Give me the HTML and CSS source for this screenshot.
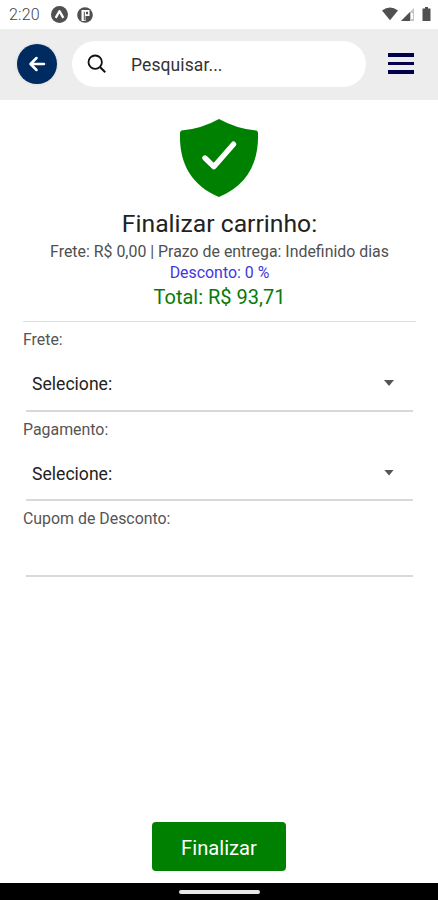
FILE: index.html
```html
<!DOCTYPE html>
<html lang="pt-BR">
<head>
<meta charset="utf-8">
<title>Finalizar carrinho</title>
<link rel="stylesheet" href="styles.css">
</head>
<body>
<div class="status">
  <span class="clock">2:20</span>
  <svg class="app-icon" viewBox="0 0 16 16"><circle cx="8" cy="8" r="8" fill="#505050"/><path d="M4.400 11.200 8 4.800l3.600 6.400M7.700 5.500h.6" fill="none" stroke="#fff" stroke-width="2.100" stroke-linejoin="round"/></svg>
  <svg class="app-icon second" viewBox="0 0 16 16"><circle cx="8" cy="8" r="7.800" fill="#505050"/><path d="M4.500 3h8v6H8.500v5H4.500z" fill="#fff"/><path d="M6.800 4.800h1v8.500h-1zM9 4.800h2v2.400H9z" fill="#505050"/></svg>
  <svg class="indicators" viewBox="0 0 50 16"><path d="M0 3.500Q8-2.500 16 3.500L8 13.200z" fill="#505050"/><path d="M19 14 32 1v13z" fill="#c4c4c4"/><path d="M19 14 28 5v9z" fill="#505050"/><path d="M29 6h2v6h-2z" fill="#fff"/><path d="M40.500 1.500h2.500V0h3v1.500h2.500V14h-8z" fill="#505050"/></svg>
</div>
<header class="header">
  <button class="back" aria-label="Voltar"><svg viewBox="0 0 20 20"><path d="M17 10H4M9.500 4 3.500 10l6 6" fill="none" stroke="#fff" stroke-width="2.500" stroke-linecap="round" stroke-linejoin="round"/></svg></button>
  <label class="search"><svg viewBox="0 0 20 20"><circle cx="8.200" cy="8.200" r="6.700" fill="none" stroke="#111" stroke-width="1.800"/><path d="m13 13 5.200 5.200" stroke="#111" stroke-width="2"/></svg><span>Pesquisar...</span></label>
  <button class="menu" aria-label="Menu"><i></i><i></i><i></i></button>
</header>
<main class="main">
  <svg class="shield" viewBox="0 0 80 80"><path d="M40 1Q58 11 77.500 12.500Q79 13 79 15C80 45 68 67 40 79C12 67 0 45 1 15Q1 13 2.500 12.500Q22 11 40 1Z" fill="#008000"/><path d="m26 40 8.800 8.700 19.700-22.500" fill="none" stroke="#fff" stroke-width="5.400" stroke-linecap="round" stroke-linejoin="round"/></svg>
  <h1 class="title"><span>Finalizar carrinho:</span></h1>
  <p class="shipping">Frete: R$ 0,00 | Prazo de entrega: Indefinido dias</p>
  <p class="discount">Desconto: 0 %</p>
  <p class="total">Total: R$ 93,71</p>
  <form class="form">
    <div class="label">Frete:</div>
    <div class="select"><span>Selecione:</span><i class="caret"></i></div>
    <div class="label">Pagamento:</div>
    <div class="select"><span>Selecione:</span><i class="caret"></i></div>
    <div class="label">Cupom de Desconto:</div>
    <div class="input"></div>
  </form>
  <button class="submit">Finalizar</button>
</main>
<footer class="nav"><i></i></footer>
</body>
</html>
```
FILE: styles.css
```css
* { box-sizing: border-box; }
body {
  margin: 0;
  height: 900px;
  display: flex;
  flex-direction: column;
  overflow: hidden;
  background: #fff;
  font-family: Roboto, sans-serif;
  color: #222;
}
h1, p { margin: 0; font-weight: 400; white-space: nowrap; }
button { border: 0; padding: 0; font-family: inherit; }
svg { display: block; flex: none; }

.status { height: 29px; display: flex; align-items: center; padding: 0 6px 0 9px; }
.clock { width: 42px; font-size: 16px; line-height: 28px; font-weight: 300; color: #444; letter-spacing: .2px; }
.app-icon { width: 17px; height: 17px; }
.second { margin-left: 9px; width: 16px; height: 16px; }
.indicators { width: 50px; height: 16px; margin-left: auto; }

.header { height: 71px; display: flex; align-items: center; padding: 0 24px 1px 17px; background: #ededed; }
.back {
  width: 40px; height: 40px; border-radius: 50%;
  display: grid; place-items: center;
  background: #002b60;
  box-shadow: 0 0 3px rgba(0, 0, 0, .12);
}
.back svg { width: 20px; height: 20px; margin-right: 1px; }
.search {
  width: 294px; height: 46px; margin-left: 15px; padding-left: 15px;
  display: flex; align-items: center;
  background: #fff; border-radius: 23px;
}
.search svg { width: 20px; height: 20px; }
.search span { margin: 1px 0 0 24px; font-size: 17.500px; letter-spacing: .1px; color: #333; }
.menu { width: 26px; margin-left: auto; margin-top: -1px; display: grid; gap: 5px; background: none; }
.menu i { height: 3.500px; background: #00004d; }

.main { flex: 1; display: flex; flex-direction: column; align-items: center; padding: 18px 22px 12px 23px; }
.shield { width: 80px; height: 80px; margin-right: 1px; }
.title { margin-top: 9px; font-size: 24.700px; line-height: 34px; color: #222; }
.shipping { margin-top: 1px; font-size: 15.900px; line-height: 20px; color: #505050; }
.discount { font-size: 15.900px; line-height: 22px; color: #4038e0; }
.total { font-size: 20px; line-height: 26px; color: #087a08; }
.form { width: 100%; margin-top: 11px; border-top: 1px solid #dedede; }
.label { height: 36px; font-size: 15.900px; line-height: 36px; color: #555; }
.select, .input { margin: 0 3px; border-bottom: 2px solid #d9d9d9; }
.select { height: 53.500px; padding: 0 19px 0 6px; display: flex; justify-content: space-between; font-size: 17.600px; line-height: 52px; color: #222; }
.caret { margin-top: 22px; width: 10px; height: 6px; background: #555; clip-path: polygon(0 0, 100% 0, 50% 100%); }
.input { height: 40px; }
.submit { margin: auto 1px 0 0; width: 134px; height: 49px; padding-top: 2px; border-radius: 4px; background: #008000; color: #fff; font-size: 20.200px; }

.nav { height: 17px; background: #000; display: grid; place-items: center; padding-top: 1px; }
.nav i { width: 81px; height: 4px; border-radius: 2px; background: #e8e8e8; }
```
